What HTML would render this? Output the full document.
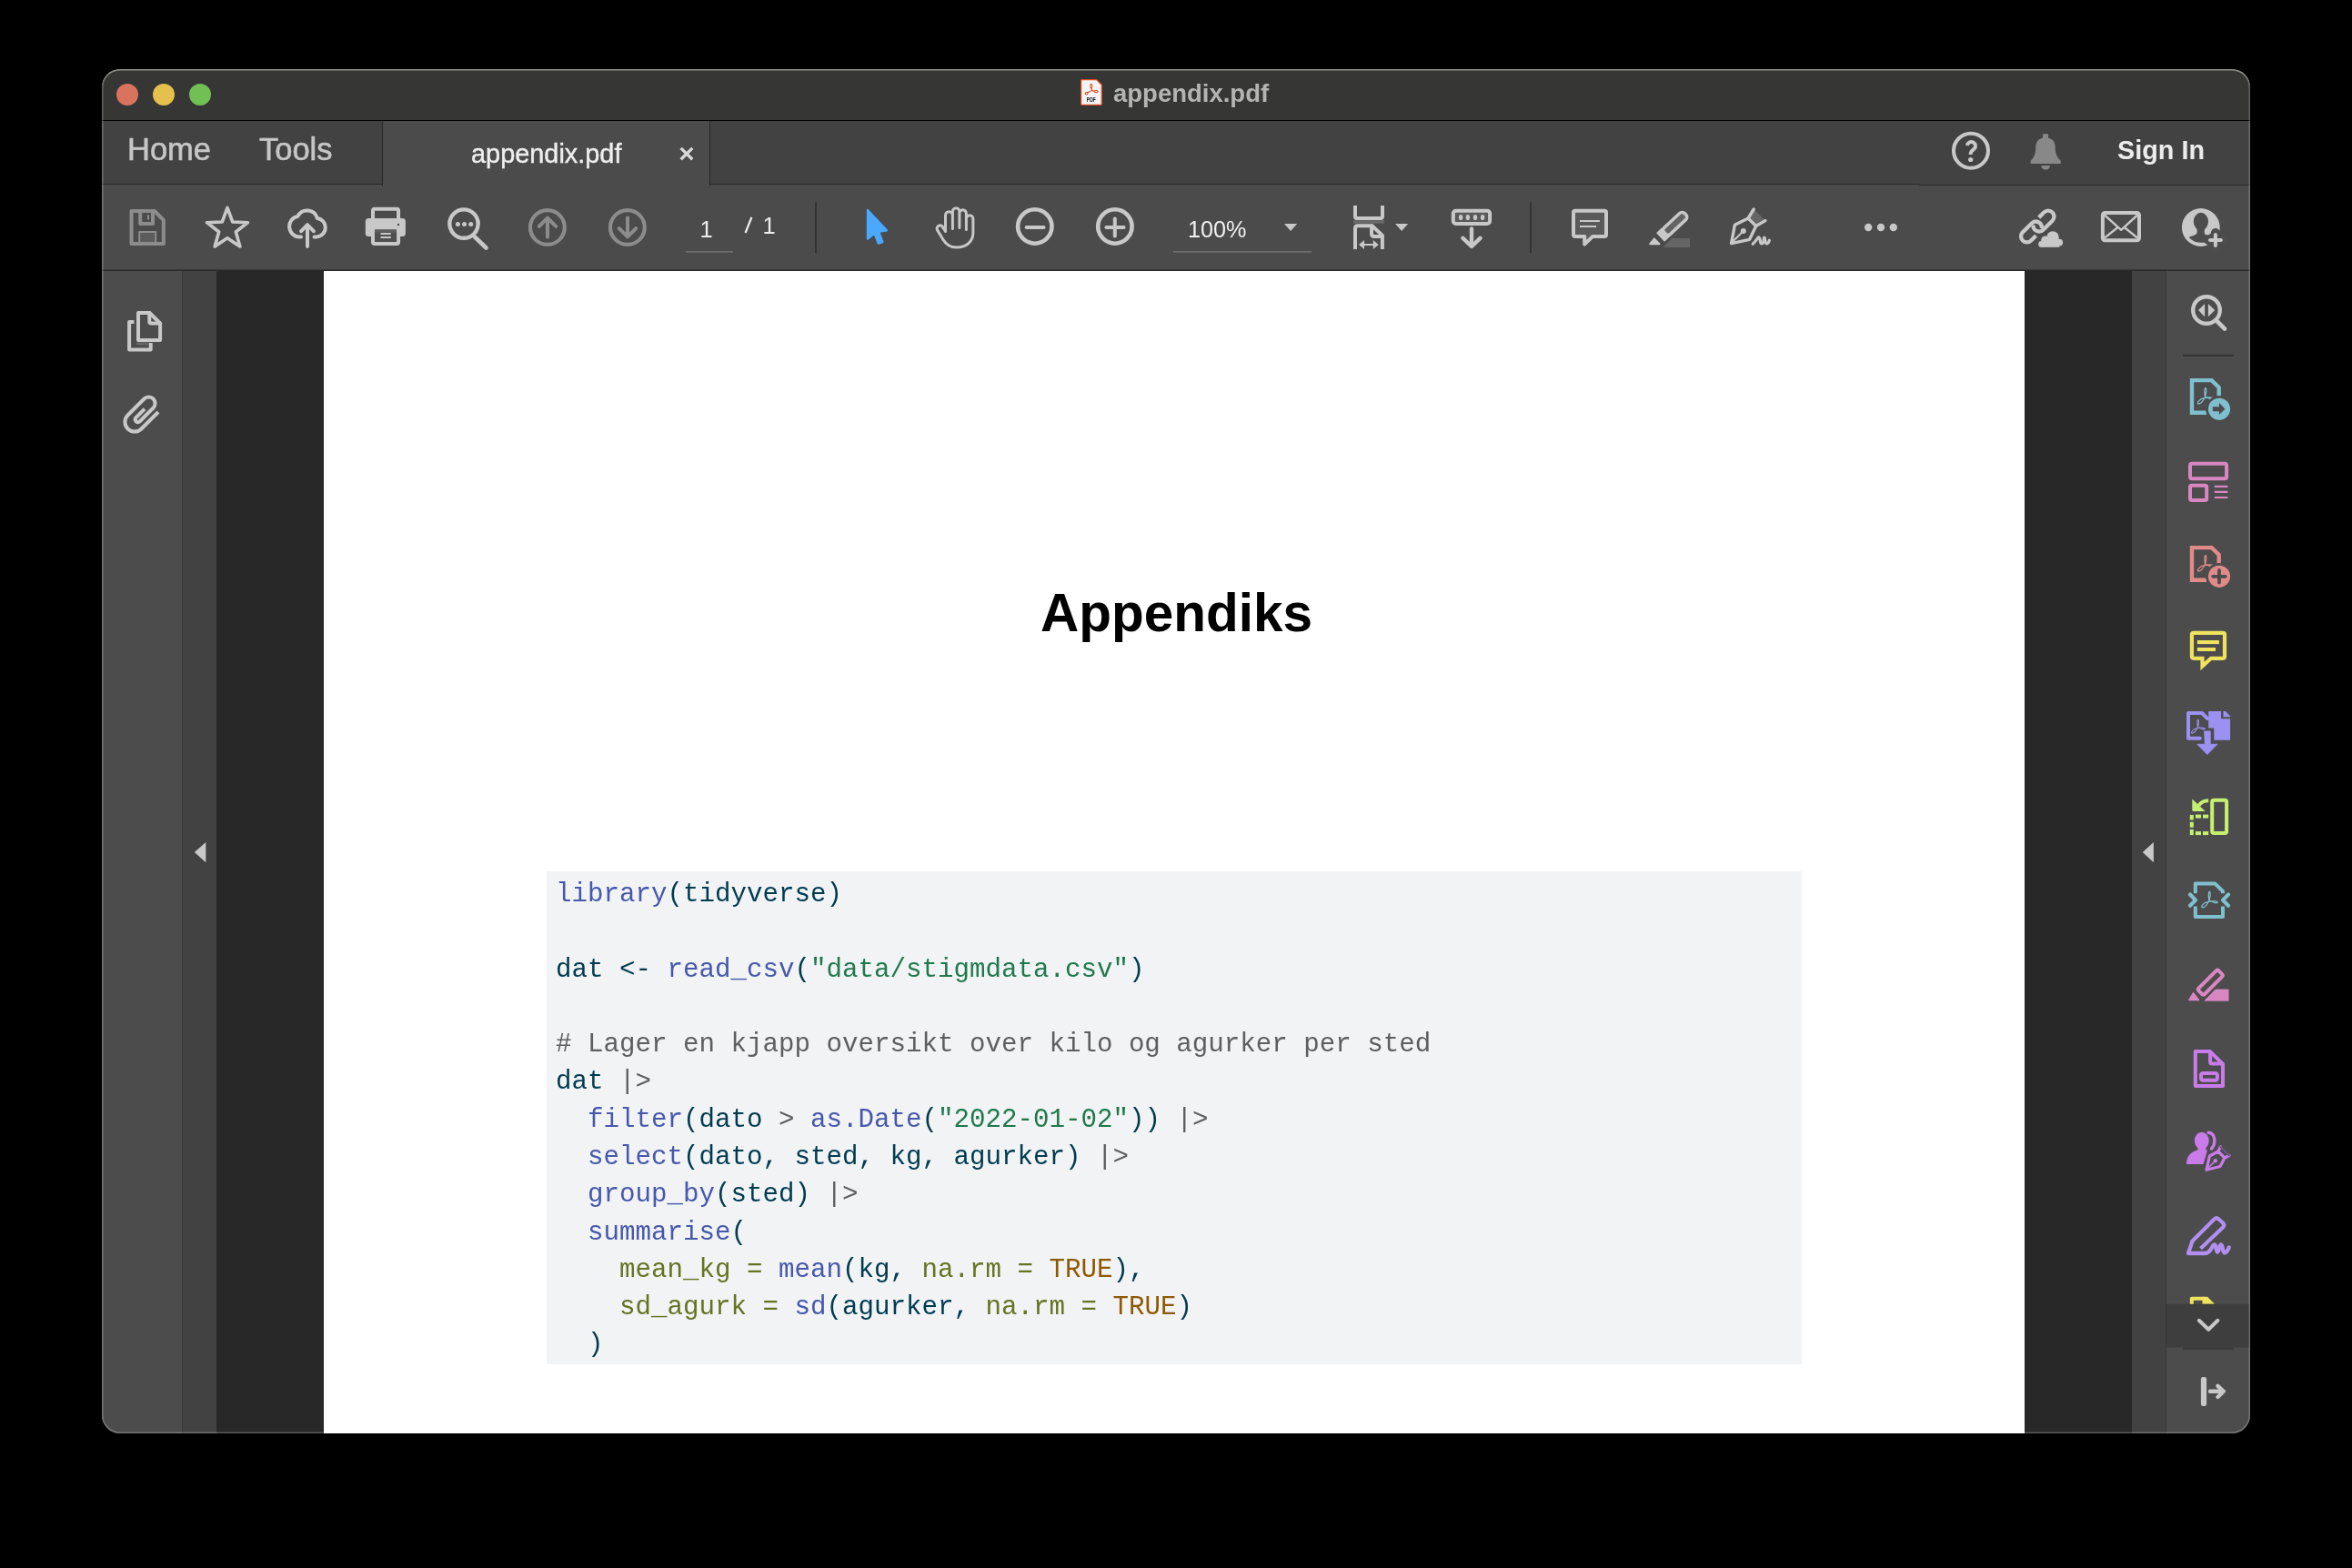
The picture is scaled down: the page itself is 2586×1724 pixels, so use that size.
<!DOCTYPE html>
<html><head><meta charset="utf-8">
<style>
html,body{margin:0;padding:0;background:#000;width:2586px;height:1724px;overflow:hidden;font-family:"Liberation Sans",sans-serif}
.abs{position:absolute}
#win{position:absolute;left:112px;top:76px;width:2362px;height:1500px;border-radius:20px;overflow:hidden;background:#4a4a4a}
#winborder{position:absolute;left:112px;top:76px;width:2362px;height:1500px;border-radius:20px;box-shadow:inset 0 0 0 1.5px rgba(255,255,255,0.23),inset 0 1.5px 0 rgba(255,255,255,0.28);pointer-events:none}
#title{left:0;top:0;width:2362px;height:56px;background:#363634;border-bottom:1.5px solid #000}
#tabs{left:0;top:57px;width:2362px;height:69px;background:#424242}
#tabsline{left:0;top:126px;width:2362px;height:1px;background:#2a2a2a}
#tool{left:0;top:127px;width:2362px;height:93px;background:#4b4b4b}
#toolline{left:0;top:220px;width:2362px;height:1px;background:#383838;box-shadow:0 1px 0 #2a2a2a}
#acttab{left:308px;top:57px;width:359px;height:71px;background:#4b4b4b;border-left:1px solid #262626;border-right:1px solid #262626}
.txt{white-space:pre;position:absolute;line-height:1;filter:grayscale(1)}
svg{position:absolute;overflow:visible}
#page{left:244px;top:222px;width:1870px;height:1290px;background:#fff}
#code{left:489px;top:882px;width:1380px;height:542px;background:#f1f3f5}
.c{will-change:transform;font-family:"Liberation Mono",monospace;font-size:29.17px;color:#003b4f;position:absolute;left:499px;white-space:pre;line-height:1}
.fu{color:#4758ab}.st{color:#20794d}.co{color:#5e5e5e}.op{color:#5e5e5e}.at{color:#657422}.cn{color:#8f5902}
</style></head><body>
<div id="win">
  <div id="title" class="abs"></div>
  <div id="tabs" class="abs"></div>
  <div id="tabsline" class="abs"></div>
  <div id="tool" class="abs"></div>
  <div id="toolline" class="abs"></div>
  <div id="acttab" class="abs"></div>
  <div class="abs" style="left:1998px;top:126px;width:364px;height:1px;background:#424242"></div>
  <div class="abs" style="left:1998px;top:127px;width:364px;height:1px;background:#2a2a2a"></div>
  <!-- content columns -->
  <div class="abs" style="left:0;top:222px;width:88px;height:1300px;background:#4c4c4c"></div>
  <div class="abs" style="left:88px;top:222px;width:1.5px;height:1300px;background:#383838"></div>
  <div class="abs" style="left:89px;top:222px;width:37px;height:1300px;background:#424242"></div>
  <div class="abs" style="left:126px;top:222px;width:118px;height:1300px;background:#282828"></div>
  <div id="page" class="abs"></div>
  <div class="abs" style="left:2114px;top:222px;width:118px;height:1300px;background:#282828"></div>
  <div class="abs" style="left:2232px;top:222px;width:37px;height:1300px;background:#424242"></div>
  <div class="abs" style="left:2269px;top:222px;width:1.5px;height:1300px;background:#383838"></div>
  <div class="abs" style="left:2270px;top:222px;width:92px;height:1300px;background:#4c4c4c"></div>

  <!-- traffic lights -->
  <div class="abs" style="left:16px;top:16px;width:24px;height:24px;border-radius:50%;background:#d9735e"></div>
  <div class="abs" style="left:56px;top:16px;width:24px;height:24px;border-radius:50%;background:#e5c04c"></div>
  <div class="abs" style="left:96px;top:16px;width:24px;height:24px;border-radius:50%;background:#70c054"></div>

  <!-- title -->
  <div class="txt" style="left:1112px;top:12.5px;font-size:27.5px;font-weight:700;color:#b4b4b4">appendix.pdf</div>

  <!-- tabs text -->
  <div class="txt" style="left:28px;top:71px;font-size:34.5px;color:#c6c6c6;-webkit-text-stroke:0.6px #c6c6c6">Home</div>
  <div class="txt" style="left:173px;top:71px;font-size:34.5px;color:#c6c6c6;-webkit-text-stroke:0.6px #c6c6c6">Tools</div>
  <div class="txt" style="left:406px;top:79px;font-size:28.9px;color:#eeeeee;-webkit-text-stroke:0.4px #eeeeee">appendix.pdf</div>
  <div class="txt" style="left:2216px;top:75.2px;font-size:28.8px;font-weight:700;color:#ececec">Sign In</div>

  <div class="txt" style="left:657.5px;top:163.5px;font-size:25.5px;color:#ececec">1</div>
  <div class="txt" style="left:726.5px;top:160px;font-size:25.5px;color:#ececec">1</div>
  <div class="txt" style="left:1194px;top:164px;font-size:25.2px;color:#f0f0f0">100%</div>

  <!-- page content -->
  <div class="txt" style="left:1032px;top:569px;font-size:58.5px;font-weight:700;color:#000">Appendiks</div>
  <div id="code" class="abs"></div>
<pre id="codetxt" class="c" style="margin:0;top:887px;line-height:41.28px"><span class="fu">library</span>(tidyverse)

dat &lt;- <span class="fu">read_csv</span>(<span class="st">"data/stigmdata.csv"</span>)

<span class="co"># Lager en kjapp oversikt over kilo og agurker per sted</span>
dat <span class="op">|&gt;</span>
  <span class="fu">filter</span>(dato <span class="op">&gt;</span> <span class="fu">as.Date</span>(<span class="st">"2022-01-02"</span>)) <span class="op">|&gt;</span>
  <span class="fu">select</span>(dato, sted, kg, agurker) <span class="op">|&gt;</span>
  <span class="fu">group_by</span>(sted) <span class="op">|&gt;</span>
  <span class="fu">summarise</span>(
    <span class="at">mean_kg =</span> <span class="fu">mean</span>(kg, <span class="at">na.rm =</span> <span class="cn">TRUE</span>),
    <span class="at">sd_agurk =</span> <span class="fu">sd</span>(agurker, <span class="at">na.rm =</span> <span class="cn">TRUE</span>)
  )</pre>

</div>
<div id="winborder"></div>
<svg id="ovl" width="2586" height="1724" style="left:0;top:0" viewBox="0 0 2586 1724">
<g fill="none" stroke-linecap="round" stroke-linejoin="round">
 <!-- pdf icon -->
 <path d="M1188.6,88.6 Q1188.6,87.6 1189.6,87.6 H1205.7 L1211.3,93.2 V114.3 Q1211.3,115.3 1210.3,115.3 H1189.6 Q1188.6,115.3 1188.6,114.3 Z" fill="#f4f4f4" stroke="#d9491f" stroke-width="1.3"/>
 <g stroke="#d9491f" stroke-width="1.05" fill="none">
  <ellipse cx="1199.8" cy="94.6" rx="1.1" ry="2.3"/>
  <ellipse cx="1205.1" cy="100.5" rx="2.1" ry="1.1"/>
  <ellipse cx="1194.6" cy="102.6" rx="1.5" ry="1.2" transform="rotate(-35 1194.6 102.6)"/>
  <path d="M1199.9,97 L1200.8,99.4 L1203,100.2 M1200.8,99.4 L1196,101.8"/>
 </g>
 <text style="filter:grayscale(1)" x="1194.8" y="112" font-family="Liberation Sans" font-weight="700" font-size="6.4" fill="#111" textLength="10" lengthAdjust="spacingAndGlyphs">PDF</text>
 <!-- tab close -->
 <path d="M748.6,162.9 L761.3,175.3 M761.3,162.9 L748.6,175.3" stroke="#d8d8d8" stroke-width="3.4" stroke-linecap="butt"/>
 <!-- save (disabled) -->
 <path d="M144.5,232 H170 L179.8,242 V268 H144.5 Z" stroke="#8c8c8c" stroke-width="4" stroke-linejoin="round"/>
 <path d="M154.2,232 V245.9 H168 V232" stroke="#8c8c8c" stroke-width="4" stroke-linecap="butt"/>
 <rect x="162" y="236.3" width="2" height="5.2" fill="#8c8c8c" stroke="none"/>
 <rect x="153.2" y="255.1" width="18" height="12" fill="#5c5c5c" stroke="#8c8c8c" stroke-width="2"/>
 <!-- star -->
 <path id="star" d="M250.00,228.40 L255.76,244.07 L272.44,244.71 L259.32,255.03 L263.87,271.09 L250.00,261.80 L236.13,271.09 L240.68,255.03 L227.56,244.71 L244.24,244.07 Z" stroke="#c8c8c8" stroke-width="3.6" stroke-linejoin="round"/>
 <!-- cloud upload -->
 <path d="M331,260.5 H329.5 A11.5,11.5 0 0 1 327.5,237.7 A11.5,11.5 0 0 1 348.8,240 A10.3,10.3 0 0 1 348,260.5 H345.5" stroke="#c8c8c8" stroke-width="4"/>
 <path d="M338,271 V247.5 M331.2,254.2 L338,247.2 L344.8,254.2" stroke="#c8c8c8" stroke-width="4"/>
 <!-- printer -->
 <rect x="410" y="229.8" width="28.1" height="14" rx="2" stroke="#c8c8c8" stroke-width="4"/>
 <rect x="401.8" y="240" width="44.1" height="20" rx="3.5" fill="#c8c8c8" stroke="none"/>
 <rect x="410" y="252.2" width="28.1" height="15.9" rx="2" fill="#505050" stroke="#c8c8c8" stroke-width="4"/>
 <rect x="412" y="252.2" width="24" height="3.4" fill="#5e5e5e" stroke="none"/>
 <path d="M418.5,257.1 H429.8 M418.5,261 H429.8" stroke="#c8c8c8" stroke-width="2" stroke-linecap="butt"/>
 <circle cx="438" cy="247" r="1.2" fill="#505050" stroke="none"/>
 <!-- search -->
 <circle cx="510" cy="246.1" r="15.7" stroke="#c8c8c8" stroke-width="4.4"/>
 <path d="M522,260.5 L534.5,272.5" stroke="#c8c8c8" stroke-width="4.6"/>
 <circle cx="503.4" cy="246.6" r="2.5" fill="#c8c8c8" stroke="none"/>
 <circle cx="510.5" cy="246.6" r="2.5" fill="#c8c8c8" stroke="none"/>
 <circle cx="517.7" cy="246.6" r="2.5" fill="#c8c8c8" stroke="none"/>
 <!-- up / down -->
 <circle cx="601.9" cy="250" r="18.9" stroke="#8c8c8c" stroke-width="4.2"/>
 <path d="M602,260.5 V240 M592.8,248.8 L602,239.6 L611.2,248.8" stroke="#8c8c8c" stroke-width="4"/>
 <circle cx="689.9" cy="250" r="18.9" stroke="#8c8c8c" stroke-width="4.2"/>
 <path d="M690,239.6 V260 M680.8,251.2 L690,260.4 L699.2,251.2" stroke="#8c8c8c" stroke-width="4"/>
 <!-- separators -->
 <rect x="896" y="222.5" width="2" height="55.5" fill="#333" stroke="none"/>
 <rect x="1682" y="222.5" width="2" height="55.5" fill="#333" stroke="none"/>
 <path d="M819.6,256 L826.4,238.8" stroke="#ececec" stroke-width="2.3" stroke-linecap="butt"/>
 <!-- page underline -->
 <rect x="754" y="276" width="52" height="1.8" fill="#6c6c6c" stroke="none"/>
 <!-- cursor -->
 <path d="M954,231 L975,253.2 L966.2,254.8 L970.3,266 L965.8,267.6 L961.5,256.5 L954,262.5 Z" fill="#4aa8ff" stroke="#4aa8ff" stroke-width="2.4"/>
 <!-- hand -->
 <path d="M1039.5,254.5 V236.7 A3.95,3.95 0 0 1 1047.4,236.7 V251.6 M1047.4,251.6 V232.4 A3.75,3.75 0 0 1 1054.9,232.4 V250.6 M1054.9,250.6 V234.5 A3.75,3.75 0 0 1 1062.4,234.5 V252.4 M1062.4,252.4 V240.4 A3.75,3.75 0 0 1 1069.9,240.4 V256 C1069.9,265.5 1062.5,272 1051.6,272 C1044.5,272 1040,268.5 1037,263.5 L1030.4,252.6 A3.5,3.5 0 0 1 1035.6,248.4 L1039.5,254.5" stroke="#c8c8c8" stroke-width="3"/>
 <!-- zoom out / in -->
 <circle cx="1137.8" cy="249" r="18.7" stroke="#c8c8c8" stroke-width="4.6"/>
 <path d="M1128.6,250.1 H1147.6" stroke="#c8c8c8" stroke-width="4"/>
 <circle cx="1225.9" cy="249" r="18.7" stroke="#c8c8c8" stroke-width="4.6"/>
 <path d="M1216.4,250.1 H1235.6 M1225.8,240.4 V259.6" stroke="#c8c8c8" stroke-width="4"/>
 <!-- zoom dropdown -->
 <path d="M1412,245.9 H1426.2 L1419.1,254.1 Z" fill="#c8c8c8" stroke="none"/>
 <rect x="1290" y="276" width="152" height="1.8" fill="#6c6c6c" stroke="none"/>
 <!-- fit page -->
 <path d="M1490,226 V238 Q1490,240 1492,240 H1518 Q1520,240 1520,238 V226" stroke="#c8c8c8" stroke-width="4" stroke-linecap="butt"/>
 <rect x="1488" y="242.3" width="34" height="3.4" fill="#6a6a6a" stroke="none"/>
 <path d="M1490,274.1 V251 Q1490,248.3 1492.7,248.3 H1508.6 L1519.9,258.8 V274.1" stroke="#c8c8c8" stroke-width="4" stroke-linecap="butt" stroke-linejoin="miter"/>
 <path d="M1508,249 V257 Q1508,260 1511,260 H1520" stroke="#c8c8c8" stroke-width="4" stroke-linecap="butt"/>
 <path d="M1498,269.1 H1512" stroke="#c8c8c8" stroke-width="2"/>
 <path d="M1494,269.1 L1500,264.1 V274.1 Z M1515.8,269.1 L1509.8,264.1 V274.1 Z" fill="#c8c8c8" stroke="none"/>
 <path d="M1534.1,245.9 H1548.1 L1541.1,254.1 Z" fill="#c8c8c8" stroke="none"/>
 <!-- scroll mode -->
 <rect x="1597.8" y="231.8" width="40.3" height="14.1" rx="3" fill="#5a5a5a" stroke="#c8c8c8" stroke-width="4"/>
 <g fill="#c8c8c8" stroke="none">
  <ellipse cx="1606.1" cy="239" rx="2.2" ry="3.1"/><ellipse cx="1613.9" cy="239" rx="2.2" ry="3.1"/><ellipse cx="1622" cy="239" rx="2.2" ry="3.1"/><ellipse cx="1630.1" cy="239" rx="2.2" ry="3.1"/>
 </g>
 <path d="M1618,251.5 V270 M1608.5,261.8 L1618,271 L1627.5,261.8" stroke="#c8c8c8" stroke-width="4.4"/>
 <!-- comment -->
 <path d="M1732,231.8 H1764 Q1766,231.8 1766,233.8 V258.1 Q1766,260.1 1764,260.1 H1751 L1742.2,268.5 V260.1 H1732 Q1730,260.1 1730,258.1 V233.8 Q1730,231.8 1732,231.8 Z" fill="#5a5a5a" stroke="#c8c8c8" stroke-width="4"/>
 <path d="M1737,243.1 H1759 M1737,249 H1755" stroke="#c8c8c8" stroke-width="2" stroke-linecap="butt"/>
 <!-- highlighter -->
 <path d="M1828.5,272 L1838,262 H1858 V272 Z" fill="#656565" stroke="none"/>
 <g transform="translate(1840.2,247.3) rotate(-43)">
  <rect x="-13.5" y="-4.9" width="31" height="9.8" rx="4" fill="#636363" stroke="#c8c8c8" stroke-width="3.6"/>
  <rect x="-20" y="-6.6" width="8.5" height="13.2" rx="0.8" fill="#c8c8c8" stroke="none"/>
 </g>
 <path d="M1814.3,268.2 L1818.8,262.6 L1824.4,268.2 Z" fill="#c8c8c8" stroke="#c8c8c8" stroke-width="2.2"/>
 <!-- pen sign -->
 <path d="M1923.3,238.8 L1928.3,229.9 L1941,242.4 L1932,247.6 Z" fill="#666" stroke="none"/>
 <path d="M1903.6,267.6 L1907.4,247.3 L1922.1,240 L1930.7,248.5 L1923.6,263.3 Z" stroke="#c8c8c8" stroke-width="3.4"/>
 <path d="M1922.1,240 L1928.2,230 M1930.7,248.5 L1940.9,242.6" stroke="#c8c8c8" stroke-width="3.4"/>
 <path d="M1905.3,265.5 L1915.5,255.3" stroke="#c8c8c8" stroke-width="2" stroke-linecap="butt"/>
 <circle cx="1916.8" cy="254" r="3" fill="#c8c8c8" stroke="none"/>
 <path d="M1927.2,268.2 C1929.5,266.3 1931.5,263.5 1932.8,261.5 C1934.5,259.5 1935.3,263.5 1935.5,265.8 C1935.8,268.4 1938.3,268.6 1938.9,265.6 C1939.3,263.6 1939.2,260.8 1940,261.2 C1940.9,261.8 1940.4,267.2 1942.2,267.8 C1943.8,268.2 1945,266 1945.4,264.2" stroke="#c8c8c8" stroke-width="3.2"/>
 <!-- more dots -->
 <circle cx="2054.2" cy="250" r="4.2" fill="#c8c8c8" stroke="none"/>
 <circle cx="2068" cy="250" r="4.2" fill="#c8c8c8" stroke="none"/>
 <circle cx="2081.8" cy="250" r="4.2" fill="#c8c8c8" stroke="none"/>
 <!-- link cloud -->
 <g transform="translate(2247,243) rotate(-45)"><path d="M-1,-6.5 H7 A6.5,6.5 0 0 1 7,6.5 H-7 A6.5,6.5 0 0 1 -11.2,-5" stroke="#c8c8c8" stroke-width="4.3" stroke-linecap="butt"/></g>
 <g transform="translate(2233.5,255) rotate(-45)"><path d="M0.7,6.5 H-7 A6.5,6.5 0 0 1 -7,-6.5 H7 A6.5,6.5 0 0 1 10.7,5.3" stroke="#c8c8c8" stroke-width="4.3" stroke-linecap="butt"/></g>
 <g fill="#4d4d4d" stroke="#4d4d4d" stroke-width="4">
  <circle cx="2257" cy="261" r="6.8"/><circle cx="2264.2" cy="266.6" r="3.9"/><circle cx="2248.8" cy="264" r="4.6"/><circle cx="2244.6" cy="268.4" r="3.4"/><rect x="2244.6" y="264.6" width="19.6" height="7.2"/>
 </g>
 <g fill="#c8c8c8" stroke="none">
  <circle cx="2257" cy="261" r="6.8"/><circle cx="2264.2" cy="266.6" r="3.9"/><circle cx="2248.8" cy="264" r="4.6"/><circle cx="2244.6" cy="268.4" r="3.4"/><rect x="2244.6" y="264.6" width="19.6" height="7.2"/>
 </g>
 <!-- mail -->
 <rect x="2311.9" y="233.9" width="40.1" height="30.3" rx="2.5" stroke="#c8c8c8" stroke-width="4"/>
 <path d="M2314,236.5 L2332.2,252.8 L2350,236.5 M2314,261.5 L2328.5,250 M2350,261.5 L2335.8,250" stroke="#c8c8c8" stroke-width="2.4" stroke-linecap="butt"/>
 <!-- user plus -->
 <circle cx="2419.8" cy="250" r="20.9" fill="#c8c8c8" stroke="none"/>
 <ellipse cx="2419.9" cy="243.6" rx="8.1" ry="9.8" fill="#4d4d4d" stroke="none"/>
 <path d="M2415.3,250 C2416,255.5 2415.8,257.6 2413,258.6 C2410,259.6 2407.8,260.2 2406.8,260.9 C2410,264.8 2415,266.8 2420,266.8 C2422,266.8 2423.5,266.7 2424.3,266.6 L2427.8,269.8 L2433,258.2 C2428.5,258.2 2425.5,258.4 2424.3,257.4 C2423.3,256 2423.8,253 2424.5,250 Z" fill="#4d4d4d" stroke="none"/>
 <path d="M2435.9,256 V271.8 M2428,263.9 H2443.9" stroke="#4d4d4d" stroke-width="10" stroke-linejoin="round"/>
 <circle cx="2433" cy="261" r="5" fill="#4d4d4d" stroke="none"/>
 <path d="M2435.9,257.9 V269.9 M2430,263.9 H2441.9" stroke="#c8c8c8" stroke-width="4"/>
 <!-- help -->
 <circle cx="2167" cy="165.7" r="19" stroke="#c8c8c8" stroke-width="4.1"/>
 <path d="M2163,160 A4.5,4.5 0 1 1 2170.5,163.8 C2168,165.6 2166.6,166.5 2166.6,170" stroke="#c8c8c8" stroke-width="4" stroke-linecap="butt"/>
 <circle cx="2166.7" cy="175.5" r="2.6" fill="#c8c8c8" stroke="none"/>
 <!-- bell -->
 <path d="M2246,152.5 V148.3 Q2246,147.2 2247.2,147.2 H2250.9 Q2252.1,147.2 2252.1,148.3 V152.5 Z" fill="#888" stroke="none"/>
 <path d="M2232.7,180 V176.8 Q2237.8,172.5 2238.3,163.5 V160 Q2239,152 2249,151.3 Q2259,152 2259.7,160 V163.5 Q2260.2,172.5 2265.7,176.8 V180 Z" fill="#888" stroke="none"/>
 <path d="M2244.3,181.9 H2254.1 A4.9,4.6 0 0 1 2244.3,181.9 Z" fill="#888" stroke="none"/>
</g>
</svg>

<svg id="ovl2" width="2586" height="1724" style="left:0;top:0" viewBox="0 0 2586 1724">
<defs>
 <path id="swirl" d="M0,0 C-1,-4 -0.9,-9.5 0.3,-9.5 C1.5,-9.5 1.3,-4 0,0 C-2.5,5 -5.5,8 -7.5,7.8 C-9,7.5 -8,4.5 -4.5,2.5 C-0.5,1 5.5,0 9,1.5 C10,2.5 7.5,3.5 4.5,2 C2.5,1 1,0.5 0,0 Z" fill="none" stroke-width="1.3"/>
</defs>
<g fill="none" stroke-linecap="round" stroke-linejoin="round">
 <!-- left panel: pages -->
 <path d="M152,374 V344 H164.5 L176.1,355.5 V374 Z" stroke="#c8c8c8" stroke-width="4"/>
 <path d="M164.3,344 V353.6 Q164.3,355.6 166.3,355.6 H176" stroke="#c8c8c8" stroke-width="4"/>
 <path d="M147.4,353.9 H142.1 V384.4 H165.7 V377" stroke="#c8c8c8" stroke-width="4" stroke-linecap="butt" stroke-linejoin="round"/>
 <rect x="150" y="376.4" width="13.8" height="3.1" fill="#666" stroke="none"/>
 <!-- paperclip -->
 <path d="M174,453 L155.5,471.5 A10.5,10.5 0 0 1 140.5,456.5 L158.5,438.5 A7.07,7.07 0 0 1 168.5,448.5 L153.5,463.5 A3,3 0 0 1 149.3,459.3 L159,449.6" stroke="#c8c8c8" stroke-width="4" stroke-linecap="butt"/>
 <!-- collapse triangles -->
 <path d="M226.3,925.9 V948.2 L213.8,937 Z" fill="#c8c8c8" stroke="none"/>
 <path d="M2367.9,926 V948.2 L2355.8,937.1 Z" fill="#c8c8c8" stroke="none"/>

 <!-- right: zoom fit -->
 <circle cx="2426" cy="341" r="14.8" stroke="#c8c8c8" stroke-width="4.4"/>
 <path d="M2436.5,352 L2446,361.5" stroke="#c8c8c8" stroke-width="4.6"/>
 <path d="M2424.1,334 V348.3 L2417,341.1 Z M2427.9,334 V348.3 L2435.2,341.1 Z" fill="#c8c8c8" stroke="none"/>
 <rect x="2400" y="389.9" width="56" height="2" fill="#343434" stroke="none"/>

 <!-- export pdf (blue) -->
 <path d="M2439.7,436 V426 L2431.7,418.1 H2410 V453.7 H2426" stroke="#7fc0cf" stroke-width="4.4" stroke-linecap="butt" stroke-linejoin="miter"/>
 <use href="#swirl" x="2424.6" y="436.2" stroke="#7fc0cf"/>
 <circle cx="2440" cy="449.8" r="14.8" fill="#4c4c4c" stroke="none"/>
 <circle cx="2440" cy="449.8" r="12.1" fill="#7fc0cf" stroke="none"/>
 <path d="M2432.8,447.2 H2439.9 V442.7 L2446.5,449.8 L2439.9,455.9 V452.3 H2432.8 Z" fill="#4c4c4c" stroke="none"/>

 <!-- organize (pink) -->
 <rect x="2408" y="509.8" width="40.1" height="16.4" rx="2" stroke="#d987c3" stroke-width="4"/>
 <rect x="2408" y="533.7" width="18.2" height="16.4" rx="2" stroke="#d987c3" stroke-width="4"/>
 <path d="M2434.8,534.8 H2449.4 M2434.8,540.9 H2449.4 M2434.8,547 H2449.4" stroke="#d987c3" stroke-width="2.2" stroke-linecap="butt"/>

 <!-- create pdf (salmon) -->
 <path d="M2439.7,620 V610 L2431.7,602.1 H2410 V637.7 H2426" stroke="#e08b89" stroke-width="4.4" stroke-linecap="butt" stroke-linejoin="miter"/>
 <use href="#swirl" x="2424.6" y="620.2" stroke="#e08b89"/>
 <circle cx="2440" cy="633.8" r="14.8" fill="#4c4c4c" stroke="none"/>
 <circle cx="2440" cy="633.8" r="12.1" fill="#e08b89" stroke="none"/>
 <path d="M2433.2,633.8 H2446.8 M2440,627 V640.6" stroke="#4c4c4c" stroke-width="3.8"/>

 <!-- comment (yellow) -->
 <path d="M2412,695.9 H2444 Q2446,695.9 2446,697.9 V721.8 Q2446,723.8 2444,723.8 H2431 L2421.5,732.5 V723.8 H2412 Q2409.9,723.8 2409.9,721.8 V697.9 Q2409.9,695.9 2412,695.9 Z" stroke="#efe35e" stroke-width="4.2" stroke-linejoin="miter"/>
 <rect x="2415.9" y="704" width="24" height="4.1" fill="#efe35e" stroke="none"/>
 <rect x="2415.9" y="712" width="20.1" height="4" fill="#efe35e" stroke="none"/>

 <!-- combine (purple) -->
 <path d="M2418.8,811.7 H2406 V784 H2421 L2427,790" stroke="#9c90f0" stroke-width="4"/>
 <use href="#swirl" x="2416.5" y="799.5" stroke="#9c90f0" transform="translate(2416.5 799.5) scale(0.85) translate(-2416.5 -799.5)"/>
 <path d="M2428.2,782 H2442 V790.2 H2452.1 V813.7 H2434.3 V800.4 H2428.2 Z" fill="#9c90f0" stroke="none"/>
 <path d="M2444.5,782 H2447 L2452.1,787.5 V788.2 H2444.5 Z" fill="#9c90f0" stroke="none"/>
 <path d="M2424,804 H2430.2 V818.3 H2437.9 L2426.9,829.5 L2415.9,818.3 H2424 Z" fill="#9c90f0" stroke="#9c90f0" stroke-width="1"/>

 <!-- rotate (lime) -->
 <rect x="2432.2" y="879.8" width="15.9" height="36.3" rx="2" stroke="#c6f070" stroke-width="4"/>
 <g fill="#c6f070" stroke="none">
  <rect x="2407.8" y="896" width="4" height="5.5"/><rect x="2407.8" y="903.8" width="4" height="6"/><rect x="2407.8" y="911.9" width="4" height="6.2"/>
  <rect x="2413.9" y="895.6" width="6.1" height="4"/><rect x="2422" y="895.6" width="6.2" height="4"/>
  <rect x="2413.9" y="914.1" width="6.1" height="4"/><rect x="2422" y="914.1" width="6.2" height="4"/>
  <path d="M2410.3,878.5 L2410.3,890.5 Q2410.3,892 2412,892 L2424.6,892 Z"/>
 </g>
 <path d="M2428.2,880.2 C2424,880.2 2420,882 2417.5,885.5" stroke="#c6f070" stroke-width="4" stroke-linecap="butt"/>

 <!-- compress (blue) -->
 <path d="M2413.8,982.3 V971.6 H2435.5 L2444,980 V982.3 M2413.8,996.6 V1007.9 H2444 V996.6" stroke="#7fc0cf" stroke-width="4" stroke-linecap="butt" stroke-linejoin="round"/>
 <path d="M2408,983.5 L2414,989.6 L2408,995.8 M2450,983.5 L2444,989.6 L2450,995.8" stroke="#7fc0cf" stroke-width="4.2"/>
 <use href="#swirl" x="2429" y="990" stroke="#7fc0cf"/>

 <!-- edit pdf (pink) -->
 <g transform="translate(2430.3,1080.2) rotate(-45)"><rect x="-15.5" y="-4.6" width="31" height="9.2" rx="2" stroke="#d987c3" stroke-width="4"/></g>
 <path d="M2407,1099.5 L2411.5,1091.8 L2417.5,1099.5 Z" fill="#d987c3" stroke="#d987c3" stroke-width="1.6"/>
 <path d="M2424.1,1100 L2436,1088 H2450.1 V1100 Z" fill="#d987c3" stroke="#d987c3" stroke-width="0.8"/>

 <!-- form (violet) -->
 <path d="M2413.8,1156.1 H2430 L2444,1170 V1193.9 H2413.8 Z" stroke="#c97be9" stroke-width="4"/>
 <path d="M2430.1,1156.5 V1167.4 Q2430.1,1169.4 2432.1,1169.4 H2443.5" stroke="#c97be9" stroke-width="4"/>
 <rect x="2420" y="1180" width="17.9" height="7.8" rx="2.2" stroke="#c97be9" stroke-width="4"/>

 <!-- request sign (violet) -->
 <ellipse cx="2420.8" cy="1254.2" rx="7.9" ry="9.5" fill="#c97be9" stroke="none"/>
 <path d="M2404,1279.9 C2404,1271 2409,1266.5 2416,1264.6 H2427 L2422.5,1279.9 Z" fill="#c97be9" stroke="none"/>
 <path d="M2416.5,1262 H2425.5 V1266 H2416.5 Z" fill="#c97be9" stroke="none"/>
 <path d="M2428,1245.2 C2433,1245.2 2435,1250 2434.8,1255 C2434.6,1259 2433,1261.5 2431.5,1263" stroke="#c97be9" stroke-width="3.4"/>
 <path d="M2426,1286.2 L2429.5,1271 L2438.8,1266 L2446,1273 L2441,1282.5 Z" stroke="#c97be9" stroke-width="3.2"/>
 <path d="M2438.8,1266 L2441.5,1261 M2446,1273 L2451,1270.5" stroke="#c97be9" stroke-width="3.2"/>
 <path d="M2441.5,1261 L2451,1270.5" stroke="#6a5a78" stroke-width="2"/>
 <path d="M2427,1285 L2434.5,1277.5" stroke="#c97be9" stroke-width="1.6"/>
 <circle cx="2435.8" cy="1276.3" r="2.2" fill="#c97be9" stroke="none"/>

 <!-- fill sign (lavender) -->
 <path d="M2406,1378 L2410.5,1364.5 L2434.5,1340.5 Q2437,1338 2439.5,1340.5 L2444,1344.5 Q2446.5,1347 2444,1349.5 L2419.5,1372.8" stroke="#b18ff0" stroke-width="4.2" stroke-linecap="butt"/>
 <path d="M2406,1378 H2424.5 C2428,1378 2430.5,1374.5 2432,1371.5 C2433,1369 2434.3,1368 2435.3,1368.6 C2436.8,1369.5 2436.2,1376.5 2438.3,1376.6 C2440,1376.7 2439.8,1368.6 2441.9,1368.4 C2444,1368.2 2443.6,1376.2 2445.3,1377.2 C2447.3,1378.4 2449.8,1374.3 2450.8,1371.5" stroke="#b18ff0" stroke-width="4.3"/>

 <!-- partial yellow -->
 <path d="M2409.8,1434 V1427.7 H2423" stroke="#efe35e" stroke-width="4" stroke-linecap="butt" stroke-linejoin="round"/>
 <path d="M2421.5,1425.7 H2427 L2435,1433.8 H2421.5 Z" fill="#efe35e" stroke="none"/>
 <rect x="2382" y="1433.8" width="90.5" height="47.7" fill="#3e3e3e" stroke="none"/>
 <rect x="2400" y="1481.5" width="56" height="2.2" fill="#383838" stroke="none"/>
 <path d="M2417.8,1451.8 L2428.2,1461.8 L2438.4,1451.8" stroke="#c8c8c8" stroke-width="4"/>
 <rect x="2419.9" y="1514" width="6.2" height="32" rx="2.2" fill="#c8c8c8" stroke="none"/>
 <path d="M2430,1529.8 H2444.5 M2438.5,1523.8 L2444.8,1529.8 L2438.5,1536" stroke="#c8c8c8" stroke-width="4.4"/>
</g>
</svg>

</body></html>
